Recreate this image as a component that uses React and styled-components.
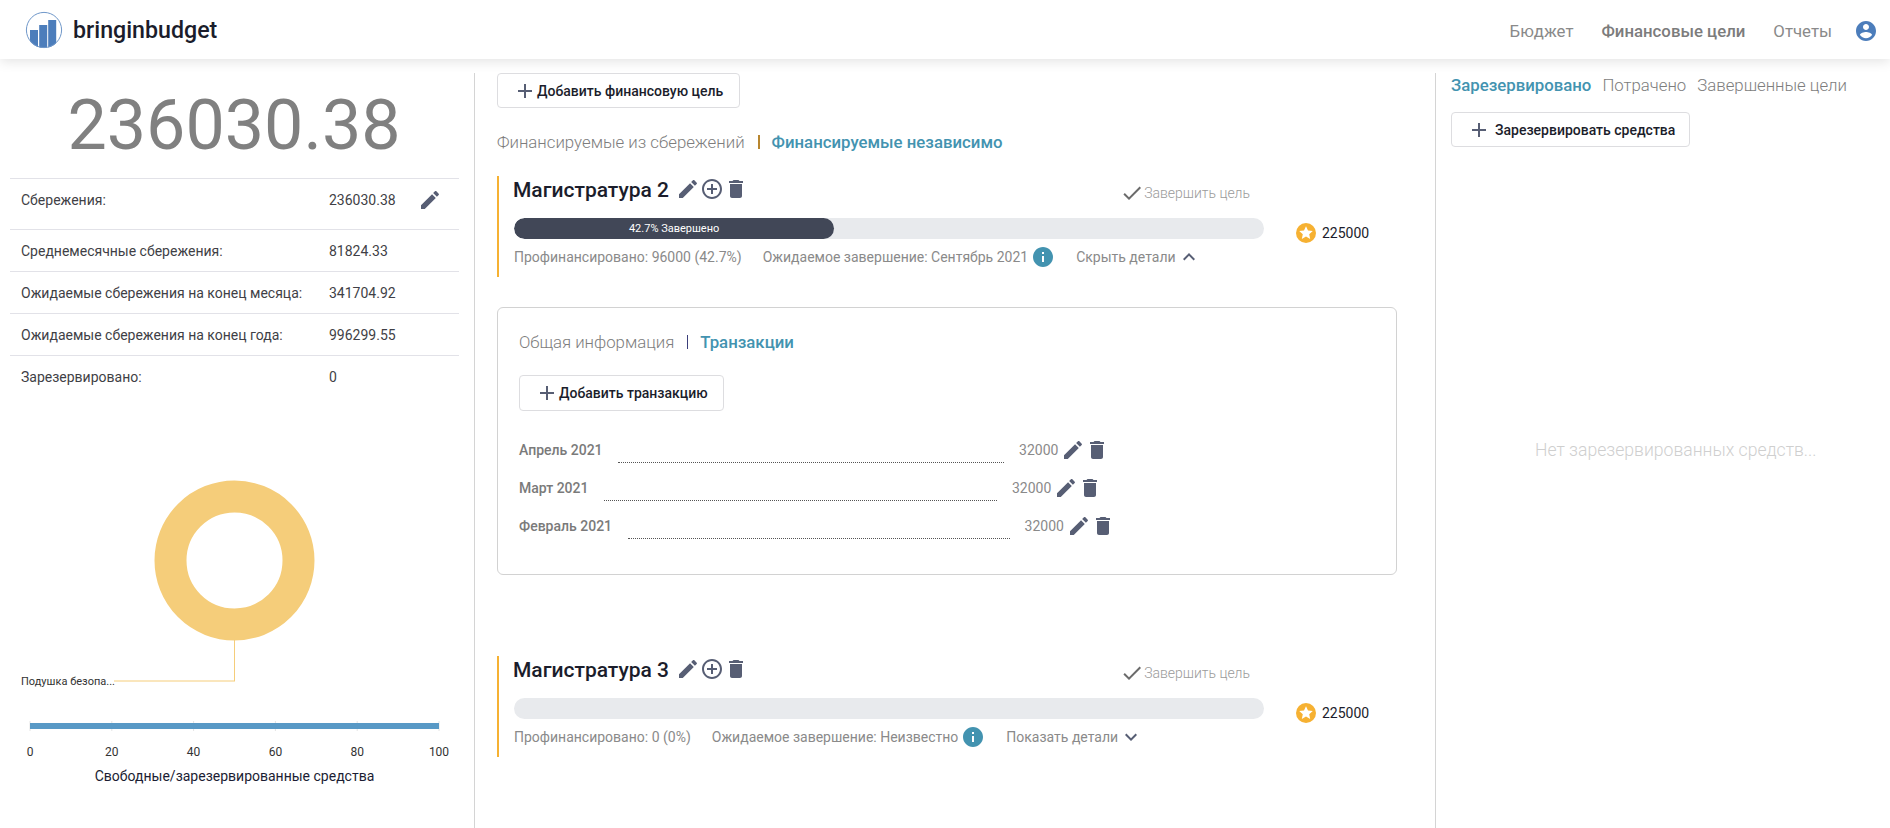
import React from 'react';
import styled, { createGlobalStyle } from 'styled-components';

const GlobalStyle = createGlobalStyle`
  html, body {
    margin: 0;
    padding: 0;
    background: #fff;
    font-family: Roboto, "Liberation Sans", sans-serif;
    overflow: hidden;
  }
  * { box-sizing: border-box; }
`;

const ICONS = {
  edit: 'M3 17.25V21h3.75L17.81 9.94l-3.75-3.75L3 17.25zM20.71 7.04c.39-.39.39-1.02 0-1.41l-2.34-2.34c-.39-.39-1.02-.39-1.41 0l-1.83 1.83 3.75 3.75 1.83-1.83z',
  trash: 'M6 19c0 1.1.9 2 2 2h8c1.1 0 2-.9 2-2V7H6v12zM19 4h-3.5l-1-1h-5l-1 1H5v2h14V4z',
  addCircle: 'M13 7h-2v4H7v2h4v4h2v-4h4v-2h-4V7zm-1-5C6.48 2 2 6.48 2 12s4.48 10 10 10 10-4.48 10-10S17.52 2 12 2zm0 18c-4.41 0-8-3.59-8-8s3.59-8 8-8 8 3.59 8 8-3.59 8-8 8z',
  add: 'M19 13h-6v6h-2v-6H5v-2h6V5h2v6h6v2z',
  check: 'M9 16.17L4.83 12l-1.42 1.41L9 19 21 7l-1.41-1.41z',
  less: 'M12 8l-6 6 1.41 1.41L12 10.83l4.59 4.58L18 14z',
  more: 'M16.59 8.59L12 13.17 7.41 8.59 6 10l6 6 6-6z',
  account: 'M12 2C6.48 2 2 6.48 2 12s4.48 10 10 10 10-4.48 10-10S17.52 2 12 2zm0 3c1.66 0 3 1.34 3 3s-1.34 3-3 3-3-1.34-3-3 1.34-3 3-3zm0 14.2c-2.5 0-4.71-1.28-6-3.22.03-1.99 4-3.08 6-3.08 1.99 0 5.97 1.09 6 3.08-1.29 1.94-3.5 3.22-6 3.22z',
  info: 'M12 2C6.48 2 2 6.48 2 12s4.48 10 10 10 10-4.48 10-10S17.52 2 12 2zm1 15h-2v-6h2v6zm0-8h-2V7h2v2z',
};

const Icon = ({ name, size = 24, color = '#575e74' }) => (
  <IconSvg viewBox="0 0 24 24" width={size} height={size} fill={color}>
    <path d={ICONS[name]} />
  </IconSvg>
);

const Logo = () => (
  <svg width="38" height="38" viewBox="0 0 38 38">
    <defs>
      <clipPath id="logoClip">
        <circle cx="19" cy="19" r="18" />
      </clipPath>
    </defs>
    <g clipPath="url(#logoClip)" fill="#4c7dbb">
      <rect x="5" y="19" width="8" height="19" />
      <rect x="14.2" y="14" width="8" height="24" />
      <rect x="23.2" y="9" width="8" height="29" />
    </g>
    <circle cx="19" cy="19" r="17.6" fill="none" stroke="#6f97c9" strokeWidth="1" />
  </svg>
);

const StarBadge = () => (
  <svg width="20" height="20" viewBox="0 0 20 20">
    <circle cx="10" cy="10" r="10" fill="#f6b132" />
    <path fill="#fff" d="M10 3.2l2 4.4 4.8.5-3.6 3.2 1 4.7-4.2-2.4-4.2 2.4 1-4.7-3.6-3.2 4.8-.5z" />
  </svg>
);

const TICKS = [0, 20, 40, 60, 80, 100];

const Chart = () => (
  <ChartSvg width="474" height="431" viewBox="0 0 474 431">
    <circle cx="234.5" cy="163.5" r="64" fill="none" stroke="#f5cd7a" strokeWidth="32" />
    <line x1="234.5" y1="243" x2="234.5" y2="284" stroke="#f5cd7a" strokeWidth="1" />
    <line x1="114" y1="284" x2="235" y2="284" stroke="#f5cd7a" strokeWidth="1" />
    <text x="21" y="288" fontSize="11" fill="#333">Подушка безопа...</text>
    {TICKS.map((t, i) => {
      const x = 30 + i * 81.8;
      return (
        <g key={t}>
          <line x1={x} y1="324" x2={x} y2="334" stroke="#e4e4e4" strokeWidth="1" />
          <text x={x} y="359" fontSize="12" textAnchor="middle" fill="#333">{t}</text>
        </g>
      );
    })}
    <rect x="30" y="326" width="409" height="6" fill="#5899c6" />
    <text x="234.5" y="384" fontSize="14" textAnchor="middle" fill="#1b1d33">Свободные/зарезервированные средства</text>
  </ChartSvg>
);

const GOALS = {
  second: {
    title: 'Магистратура 2',
    progress: 42.7,
    funded: 'Профинансировано: 96000 (42.7%)',
    eta: 'Ожидаемое завершение: Сентябрь 2021',
    toggle: 'Скрыть детали',
    chevron: 'less',
  },
  third: {
    title: 'Магистратура 3',
    progress: 0,
    funded: 'Профинансировано: 0 (0%)',
    eta: 'Ожидаемое завершение: Неизвестно',
    toggle: 'Показать детали',
    chevron: 'more',
  },
};

const SUMMARY = [
  { label: 'Среднемесячные сбережения:', value: '81824.33' },
  { label: 'Ожидаемые сбережения на конец месяца:', value: '341704.92' },
  { label: 'Ожидаемые сбережения на конец года:', value: '996299.55' },
  { label: 'Зарезервировано:', value: '0' },
];

const TRANSACTIONS = [
  { month: 'Апрель 2021', line: 386 },
  { month: 'Март 2021', line: 393 },
  { month: 'Февраль 2021', line: 382 },
];

const Goal = ({ goal }) => (
  <GoalBox>
    <GoalHead>
      <GoalTitle>{goal.title}</GoalTitle>
      <IconRow>
        <Icon name="edit" />
        <Icon name="addCircle" />
        <Icon name="trash" />
      </IconRow>
      <CompleteGoal>
        <Icon name="check" color="#6b6b6b" />
        Завершить цель
      </CompleteGoal>
    </GoalHead>
    <ProgressRow>
      <Track>
        {goal.progress > 0 && (
          <Fill style={{ width: `${goal.progress}%` }}>{goal.progress}% Завершено</Fill>
        )}
      </Track>
      <Amount>
        <StarBadge />
        225000
      </Amount>
    </ProgressRow>
    <Meta>
      <span>{goal.funded}</span>
      <Eta>
        {goal.eta}
        <Icon name="info" color="#4393b0" />
      </Eta>
      <Toggle>
        {goal.toggle}
        <Icon name={goal.chevron} color="#575e74" />
      </Toggle>
    </Meta>
  </GoalBox>
);

export default function App() {
  return (
    <>
      <GlobalStyle />
      <Navbar>
        <Brand>
          <Logo />
          <BrandName>bringinbudget</BrandName>
        </Brand>
        <NavLinks>
          <NavLink>Бюджет</NavLink>
          <NavLink $active>Финансовые цели</NavLink>
          <NavLink>Отчеты</NavLink>
          <Icon name="account" color="#4c7dbb" />
        </NavLinks>
      </Navbar>
      <Main>
        <LeftColumn>
          <BigNumber>236030.38</BigNumber>
          <SummaryTable>
            <SummaryRow $tall>
              <SummaryLabel>Сбережения:</SummaryLabel>
              <SummaryValue>236030.38</SummaryValue>
              <RowIcon><Icon name="edit" /></RowIcon>
            </SummaryRow>
            {SUMMARY.map((row) => (
              <SummaryRow key={row.label}>
                <SummaryLabel>{row.label}</SummaryLabel>
                <SummaryValue>{row.value}</SummaryValue>
              </SummaryRow>
            ))}
          </SummaryTable>
          <Chart />
        </LeftColumn>

        <MiddleColumn>
          <AddButton>
            <Icon name="add" />
            Добавить финансовую цель
          </AddButton>
          <Tabs>
            <Tab>Финансируемые из сбережений</Tab>
            <Divider $color="#b8862f" />
            <Tab $active>Финансируемые независимо</Tab>
          </Tabs>
          <Goal goal={GOALS.second} />
          <DetailsCard>
            <Tabs $flush>
              <Tab>Общая информация</Tab>
              <Divider $color="#3b3f7a" $thin />
              <Tab $active>Транзакции</Tab>
            </Tabs>
            <CardButton>
              <Icon name="add" />
              Добавить транзакцию
            </CardButton>
            <TransactionList>
              {TRANSACTIONS.map((tx) => (
                <Transaction key={tx.month}>
                  <TxMonth>{tx.month}</TxMonth>
                  <TxLine $width={tx.line} />
                  <TxValue>32000</TxValue>
                  <IconRow>
                    <Icon name="edit" />
                    <Icon name="trash" />
                  </IconRow>
                </Transaction>
              ))}
            </TransactionList>
          </DetailsCard>
          <SecondGoal>
            <Goal goal={GOALS.third} />
          </SecondGoal>
        </MiddleColumn>

        <RightColumn>
          <RightTabs>
            <Tab $active>Зарезервировано</Tab>
            <Tab>Потрачено</Tab>
            <Tab>Завершенные цели</Tab>
          </RightTabs>
          <ReserveButton>
            <Icon name="add" />
            Зарезервировать средства
          </ReserveButton>
          <Empty>Нет зарезервированных средств...</Empty>
        </RightColumn>
      </Main>
    </>
  );
}

const IconSvg = styled.svg`
  flex: none;
  display: block;
`;

const ChartSvg = styled.svg`
  display: block;
`;

const Navbar = styled.header`
  height: 59px;
  padding: 0 12px 0 25px;
  display: flex;
  align-items: center;
  justify-content: space-between;
  background: #fff;
  box-shadow: 0 2px 12px rgba(0, 0, 0, 0.12);
  position: relative;
`;

const Brand = styled.div`
  display: flex;
  align-items: center;
  gap: 10px;
`;

const BrandName = styled.span`
  font-size: 23.2px;
  font-weight: 500;
  color: #1b1d2b;
`;

const NavLinks = styled.nav`
  display: flex;
  align-items: center;
  gap: 28px;
  padding-top: 3px;

  svg {
    margin-left: -6px;
  }
`;

const NavLink = styled.a`
  font-size: 16.8px;
  font-weight: ${(p) => (p.$active ? 500 : 400)};
  color: ${(p) => (p.$active ? '#7c7c7c' : '#8a8a8a')};
`;

const Main = styled.main`
  display: grid;
  grid-template-columns: 475px 961px 1fr;
  height: 755px;
  margin-top: 14px;
`;

const LeftColumn = styled.section`
  border-right: 1px solid #d4d4d4;
  overflow: hidden;
`;

const BigNumber = styled.div`
  height: 105px;
  line-height: 105px;
  font-size: 70px;
  font-weight: 400;
  color: #808080;
  text-align: center;
  padding-right: 6px;
`;

const SummaryTable = styled.div`
  margin: 0 15px 0 10px;
`;

const SummaryRow = styled.div`
  height: ${(p) => (p.$tall ? 51 : 42)}px;
  border-top: 1px solid #e2e2e8;
  display: flex;
  align-items: flex-start;
  padding: 12px 0 0 11px;
  font-size: 14px;
  line-height: 18px;
  color: #3f3f46;
  position: relative;
`;

const SummaryLabel = styled.span`
  width: 308px;
`;

const SummaryValue = styled.span``;

const RowIcon = styled.span`
  position: absolute;
  left: 408px;
  top: 9px;
`;

const MiddleColumn = styled.section`
  padding-left: 22px;
  border-right: 1px solid #d4d4d4;
  overflow: hidden;
`;

const ButtonBase = styled.button`
  display: flex;
  align-items: center;
  padding: 0 14px 0 15px;
  height: 35px;
  background: #fff;
  border: 1px solid #dddde0;
  border-radius: 4px;
  font-family: inherit;
  font-size: 14px;
  font-weight: 500;
  color: #1b1d2b;
  white-space: nowrap;
`;

const AddButton = styled(ButtonBase)`
  width: 243px;
`;

const CardButton = styled(ButtonBase)`
  width: 205px;
  height: 36px;
  margin-top: 21px;
`;

const ReserveButton = styled(ButtonBase)`
  width: 239px;
  gap: 4px;
  margin-top: 15px;
`;

const Tabs = styled.div`
  display: flex;
  align-items: center;
  height: 24px;
  margin-top: ${(p) => (p.$flush ? 0 : 22)}px;
`;

const Tab = styled.span`
  font-size: 16.8px;
  font-weight: ${(p) => (p.$active ? 500 : 300)};
  color: ${(p) => (p.$active ? '#4393b0' : '#7d7d7d')};
  white-space: nowrap;
`;

const Divider = styled.i`
  width: ${(p) => (p.$thin ? 1 : 2)}px;
  height: 14px;
  margin: 0 12px 0 13px;
  background: ${(p) => p.$color};
`;

const GoalBox = styled.article`
  margin-top: 22px;
  height: 101px;
  width: 900px;
  padding: 1px 0 0 15px;
  border-left: 2px solid #f6b132;
`;

const SecondGoal = styled.div`
  margin-top: 81px;

  ${GoalBox} {
    margin-top: 0;
  }
`;

const GoalHead = styled.div`
  display: flex;
  align-items: center;
  width: 750px;
  height: 24px;
`;

const GoalTitle = styled.h3`
  margin: 2px 7px 0 -1px;
  font-size: 21px;
  font-weight: 500;
  line-height: 24px;
  color: #1b1d2b;
`;

const IconRow = styled.div`
  display: flex;
`;

const CompleteGoal = styled.div`
  display: flex;
  align-items: center;
  margin: 8px 14px 0 auto;
  font-size: 14px;
  font-weight: 300;
  color: #9a9a9a;
`;

const ProgressRow = styled.div`
  display: flex;
  align-items: flex-start;
  gap: 32px;
  margin-top: 17px;
`;

const Track = styled.div`
  width: 750px;
  height: 21px;
  border-radius: 11px;
  background: #e8eaed;
  overflow: hidden;
`;

const Fill = styled.div`
  height: 100%;
  border-radius: 11px;
  background: #414757;
  color: #fff;
  font-size: 11px;
  line-height: 21px;
  text-align: center;
`;

const Amount = styled.div`
  display: flex;
  align-items: center;
  gap: 6px;
  margin-top: 5px;
  font-size: 14px;
  color: #1b1d2b;
`;

const Meta = styled.div`
  display: flex;
  align-items: center;
  gap: 21px;
  height: 24px;
  margin-top: 2px;
  font-size: 14px;
  color: #8a8a8a;
`;

const Eta = styled.span`
  display: flex;
  align-items: center;
  gap: 3px;
`;

const Toggle = styled.span`
  display: flex;
  align-items: center;
  gap: 1px;
`;

const DetailsCard = styled.div`
  width: 900px;
  height: 268px;
  margin-top: 30px;
  padding: 22px 21px 0;
  border: 1px solid #d2d2d2;
  border-radius: 6px;
`;

const TransactionList = styled.div`
  margin-top: 27px;
`;

const Transaction = styled.div`
  display: flex;
  align-items: flex-start;
  height: 38px;
  font-size: 14px;
  line-height: 24px;
`;

const TxMonth = styled.span`
  font-weight: 500;
  color: #7a7a7a;
`;

const TxLine = styled.i`
  width: ${(p) => p.$width}px;
  height: 25px;
  margin: 0 15px 0 15.5px;
  border-bottom: 1px dotted #555;
`;

const TxValue = styled.span`
  margin-right: 3px;
  color: #8a8a8a;
`;

const RightColumn = styled.section`
  padding-left: 15px;
  position: relative;
`;

const RightTabs = styled.div`
  display: flex;
  gap: 11px;
  height: 24px;
  line-height: 24px;
`;

const Empty = styled.div`
  margin-top: 293px;
  padding-left: 84px;
  font-size: 17.6px;
  font-weight: 300;
  color: #cfcfcf;
  white-space: nowrap;
`;
